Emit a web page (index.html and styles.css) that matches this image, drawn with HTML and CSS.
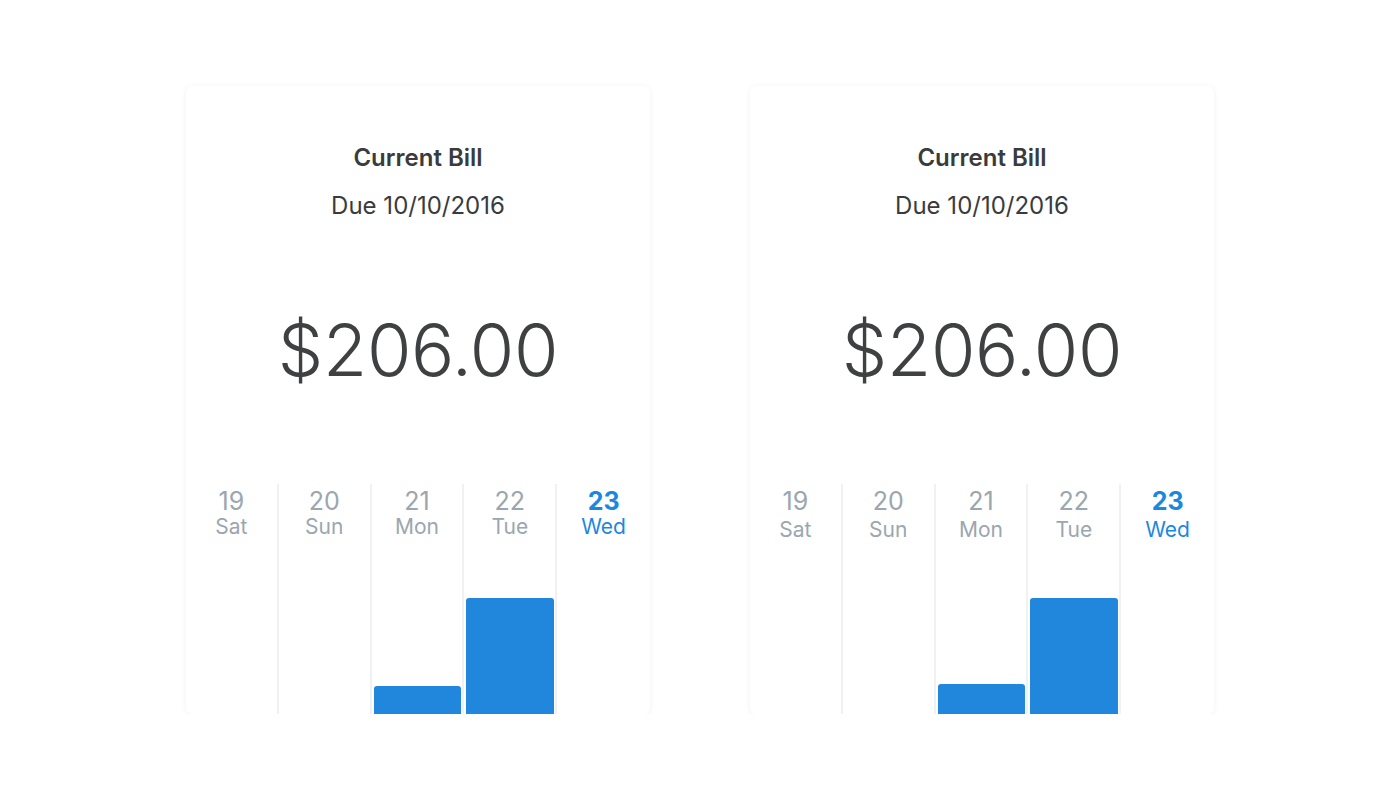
FILE: index.html
```html
<!DOCTYPE html>
<html lang="en">
<head>
<meta charset="utf-8">
<title>Current Bill</title>
<link rel="stylesheet" href="styles.css">
</head>
<body>
<main class="stage">
  <section class="card">
    <header class="card-head">
      <h2 class="title">Current Bill</h2>
      <p class="due">Due 10/10/2016</p>
    </header>
    <div class="amount">$206.00</div>
    <div class="chart">
      <div class="day"><span class="num">19</span><span class="name">Sat</span></div>
      <div class="day"><span class="num">20</span><span class="name">Sun</span></div>
      <div class="day"><span class="num">21</span><span class="name">Mon</span><div class="bar" style="height:28px"></div></div>
      <div class="day"><span class="num">22</span><span class="name">Tue</span><div class="bar" style="height:116px"></div></div>
      <div class="day today"><span class="num">23</span><span class="name">Wed</span></div>
    </div>
  </section>
  <section class="card card-alt">
    <header class="card-head">
      <h2 class="title">Current Bill</h2>
      <p class="due">Due 10/10/2016</p>
    </header>
    <div class="amount">$206.00</div>
    <div class="chart">
      <div class="day"><span class="num">19</span><span class="name">Sat</span></div>
      <div class="day"><span class="num">20</span><span class="name">Sun</span></div>
      <div class="day"><span class="num">21</span><span class="name">Mon</span><div class="bar" style="height:30px"></div></div>
      <div class="day"><span class="num">22</span><span class="name">Tue</span><div class="bar" style="height:116px"></div></div>
      <div class="day today"><span class="num">23</span><span class="name">Wed</span></div>
    </div>
  </section>
</main>
</body>
</html>
```
FILE: styles.css
```css
* { box-sizing: border-box; }
html, body { margin: 0; padding: 0; background: #ffffff; }
body {
  font-family: "Inter", "Noto Sans", "Liberation Sans", sans-serif;
  color: #3d3e40;
}
.stage {
  display: flex;
  justify-content: center;
  gap: 100px;
  padding-top: 86px;
}
.card {
  width: 464px;
  height: 628px;
  background: #fff;
  border-radius: 6px;
  box-shadow: 0 1px 6px rgba(0, 0, 0, 0.06);
  display: flex;
  flex-direction: column;
  align-items: stretch;
  overflow: hidden;
}
.card-head {
  text-align: center;
  padding-top: 58px;
}
.title {
  margin: 0;
  font-size: 24px;
  font-weight: 600;
  line-height: 28px;
  color: #3a3b3d;
}
.due {
  margin: 20px 0 0;
  font-size: 24px;
  font-weight: 400;
  line-height: 28px;
  color: #3a3b3d;
}
.amount {
  margin-top: 88px;
  text-align: center;
  font-size: 72px;
  font-weight: 300;
  line-height: 84px;
  color: #3f4042;
  letter-spacing: -0.3px;
}
.chart {
  margin-top: auto;
  height: 230px;
  display: grid;
  grid-template-columns: repeat(5, 1fr);
}
.day {
  display: flex;
  flex-direction: column;
  align-items: center;
  border-right: 2px solid #f0f1f3;
  padding-top: 3px;
  color: #9ba6af;
}
.day:last-child { border-right: none; }
.num {
  font-size: 25px;
  line-height: 28px;
  font-weight: 400;
}
.name {
  font-size: 21px;
  line-height: 24px;
  font-weight: 400;
}
.today { color: #1c87de; }
.today .num { font-weight: 700; }
.bar {
  margin-top: auto;
  align-self: stretch;
  margin-left: 2px;
  margin-right: 1px;
  background: #2187dd;
  border-radius: 3px 3px 0 0;
}
.card-alt .name { line-height: 30px; }
```
